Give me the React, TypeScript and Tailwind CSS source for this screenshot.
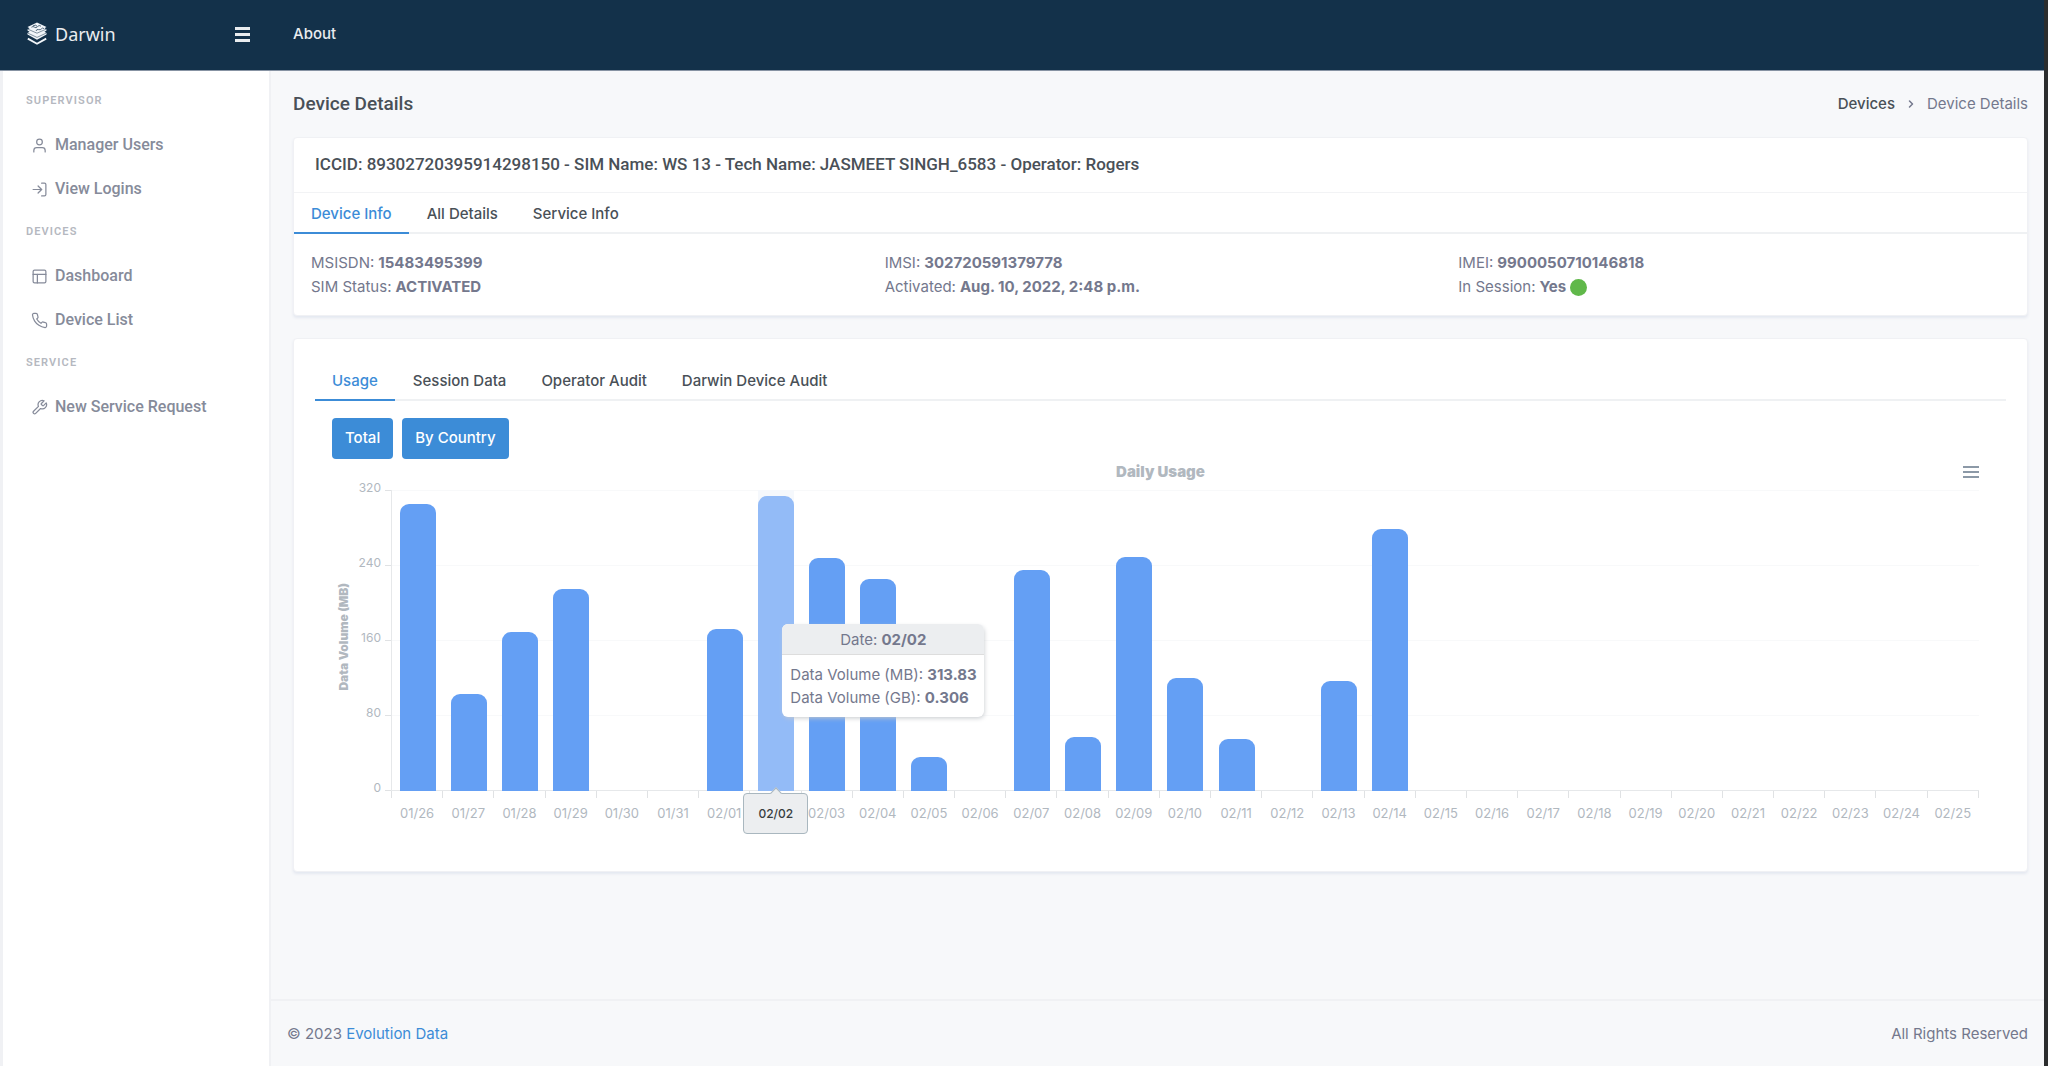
import React, { useState } from 'react'
import { FiUser, FiLogIn, FiLayout, FiPhone, FiTool, FiChevronRight } from 'react-icons/fi'

interface UsageDay {
  date: string
  mb: number
}

const menu = [
  {
    title: 'Supervisor',
    items: [
      { label: 'Manager Users', icon: FiUser },
      { label: 'View Logins', icon: FiLogIn },
    ],
  },
  {
    title: 'Devices',
    items: [
      { label: 'Dashboard', icon: FiLayout },
      { label: 'Device List', icon: FiPhone },
    ],
  },
  {
    title: 'Service',
    items: [{ label: 'New Service Request', icon: FiTool }],
  },
]

const usage: UsageDay[] = [
  { date: '01/26', mb: 305.5 },
  { date: '01/27', mb: 103.5 },
  { date: '01/28', mb: 168.6 },
  { date: '01/29', mb: 214.5 },
  { date: '01/30', mb: 0 },
  { date: '01/31', mb: 0 },
  { date: '02/01', mb: 172.3 },
  { date: '02/02', mb: 313.83 },
  { date: '02/03', mb: 247.5 },
  { date: '02/04', mb: 225.5 },
  { date: '02/05', mb: 36 },
  { date: '02/06', mb: 0 },
  { date: '02/07', mb: 235 },
  { date: '02/08', mb: 57 },
  { date: '02/09', mb: 249 },
  { date: '02/10', mb: 120 },
  { date: '02/11', mb: 55 },
  { date: '02/12', mb: 0 },
  { date: '02/13', mb: 117.3 },
  { date: '02/14', mb: 279 },
  { date: '02/15', mb: 0 },
  { date: '02/16', mb: 0 },
  { date: '02/17', mb: 0 },
  { date: '02/18', mb: 0 },
  { date: '02/19', mb: 0 },
  { date: '02/20', mb: 0 },
  { date: '02/21', mb: 0 },
  { date: '02/22', mb: 0 },
  { date: '02/23', mb: 0 },
  { date: '02/24', mb: 0 },
  { date: '02/25', mb: 0 },
]

const MAX_MB = 320
const ticks = [320, 240, 160, 80, 0]

function Logo() {
  return (
    <svg viewBox="0 0 20 24" className="w-5 h-6 text-slate-100" aria-hidden="true">
      <path d="M10 .5 19.5 5 17.5 6.2 19.5 7.4 19.5 8.6 17.5 9.8 19.5 11 19.5 12.6 10 17.8.5 12.6.5 11 2.5 9.8.5 8.6.5 7.4 2.5 6.2.5 5z" fill="currentColor" />
      <path d="M1 7.2 10 11.200l9-4M1 11.200l9 4.200 9-4.200" fill="none" stroke="#13314a" strokeWidth=".5" />
      <path d="M4.500 5.200q1.500-1.400 3 0t3-.6 3.500-.4M9 9q.5-2 2.500-1.400t3-.8 2.500-.2M6 3.800l2.500-.6 1.500 1" fill="none" stroke="#13314a" strokeWidth=".7" />
      <path d="M.8 16.600 10 21.800l9.200-5.200" fill="none" stroke="currentColor" strokeWidth="1.8" />
    </svg>
  )
}

function Tabs({ tabs, label }: { tabs: string[]; label: string }) {
  const [active, setActive] = useState(tabs[0])

  return (
    <div role="tablist" aria-label={label} className="flex gap-px border-b-2 border-[#eff1f3]">
      {tabs.map(tab => (
        <button
          key={tab}
          role="tab"
          aria-selected={tab === active}
          onClick={() => setActive(tab)}
          className={`-mb-0.5 h-[41px] pt-[3px] px-[17px] border-b-2 text-[15px] font-medium ${
            tab === active ? 'border-[#3c8cd7] text-[#3c8cd7]' : 'border-transparent text-[#495057]'
          }`}
        >
          {tab}
        </button>
      ))}
    </div>
  )
}

function Field({ name, children }: { name: string; children: React.ReactNode }) {
  return (
    <p className="flex items-center gap-1">
      {name}: <strong className="font-bold">{children}</strong>
    </p>
  )
}

function UsageChart() {
  const hovered = '02/02'

  return (
    <div className="px-[17px] pb-[73px]">
      <div className="relative flex justify-center items-center h-[26px]">
        <h2 className="text-[15px] font-black text-[#b1b8bf]">Daily Usage</h2>
        <button aria-label="Chart menu" className="absolute right-[10px] flex flex-col gap-[3px]">
          <span className="w-4 h-0.5 bg-[#8c99a7]"></span>
          <span className="w-4 h-0.5 bg-[#8c99a7]"></span>
          <span className="w-4 h-0.5 bg-[#8c99a7]"></span>
        </button>
      </div>

      <div className="flex mt-[5px] pr-[10px]">
        <div className="flex items-center w-6 h-[293px] justify-center">
          <span className="[writing-mode:vertical-rl] rotate-180 text-xs font-black text-[#b1b8bf] whitespace-nowrap">
            Data Volume (MB)
          </span>
        </div>
        <div className="flex flex-col justify-between -mt-[3px] w-[25px] h-[301px] text-right text-xs leading-[1px] text-[#b1b8bf]">
          {ticks.map(tick => (
            <span key={tick}>{tick}</span>
          ))}
        </div>

        <div className="ml-1 flex-1">
          <div className="grid h-[301px] pl-[6px]">
            <div className="[grid-area:1/1] flex flex-col justify-between">
              {ticks.map(tick => (
                <div key={tick} className="flex h-px">
                  <span className="-ml-[6px] w-[6px] bg-[#e0e2e4]"></span>
                  <span className={`flex-1 ${tick === 0 ? 'bg-[#e6e8ea]' : 'bg-[#f8f9fa]'}`}></span>
                </div>
              ))}
            </div>
            <div className="[grid-area:1/1] relative flex items-end border-l border-[#e6e8ea]">
              {usage.map(day => (
                <div key={day.date} className="relative flex-1 h-full flex items-end justify-center">
                  <div className={`flex items-end w-[36px] h-full ${day.date === hovered ? 'bg-[#f5f8fc]' : ''}`}>
                    <div
                      className={`w-full rounded-t-[9px] ${day.date === hovered ? 'bg-[#93bbf7]' : 'bg-[#649ff4]'}`}
                      style={{ height: `${(day.mb / MAX_MB) * 100}%` }}
                    ></div>
                  </div>
                  {day.date === hovered && (
                    <div
                      role="tooltip"
                      className="absolute z-10 left-8 top-[134px] w-[202px] rounded-md overflow-hidden bg-white text-[#74788d] text-[15px] shadow-[1px_2px_5px_-1px_#c4c8cc]"
                    >
                      <p className="h-[31px] leading-[31px] text-center bg-[#eceef0] border-b border-[#dddddd]">
                        Date: <strong>02/02</strong>
                      </p>
                      <div className="px-2 py-2 leading-[23px] whitespace-nowrap">
                        <p>Data Volume (MB): <strong>313.83</strong></p>
                        <p>Data Volume (GB): <strong>0.306</strong></p>
                      </div>
                    </div>
                  )}
                </div>
              ))}
            </div>
          </div>

          <div className="flex pl-[6px]">
            {usage.map(day => (
              <div
                key={day.date}
                className="relative flex-1 h-[7px] border-l border-[#e0e2e4] last:border-r"
              >
                <span className="absolute top-3 inset-x-0 text-center text-[13px] leading-5 text-[#b1b8bf]">
                  {day.date}
                </span>
                {day.date === hovered && (
                  <div className="absolute z-10 top-[2px] -left-[7px] w-[65px] h-[41px] flex items-center justify-center rounded-sm border border-[#a9b7bf] bg-[#eceef0] text-xs font-medium text-[#373d3f]">
                    <span className="absolute -top-[5px] size-2 rotate-45 border-l border-t border-[#a9b7bf] bg-[#eceef0]"></span>
                    {day.date}
                  </div>
                )}
              </div>
            ))}
          </div>
        </div>
      </div>
    </div>
  )
}

export default function App() {
  return (
    <div className="min-h-screen flex flex-col bg-[#f7f8fa] border-r-4 border-[#2b2d2e] font-['Inter',sans-serif] text-[15px] text-[#74788d]">
      <header className="flex items-center h-[70px] pb-[2px] bg-[#13314a] text-[#e9ecef]">
        <div className="w-[271px] flex items-center justify-between pl-[27px] pr-[21px]">
          <a href="#" className="flex items-center gap-2 font-['Noto_Sans',sans-serif] text-lg">
            <Logo />
            Darwin
          </a>
          <button aria-label="Toggle menu" className="flex flex-col gap-[3px]">
            <span className="w-[15px] h-[3px] bg-[#e9ecef]"></span>
            <span className="w-[15px] h-[3px] bg-[#e9ecef]"></span>
            <span className="w-[15px] h-[3px] bg-[#e9ecef]"></span>
          </button>
        </div>
        <a href="#" className="ml-[22px] font-medium">About</a>
      </header>

      <div className="flex flex-1 border-t border-[#8793a3]">
        <nav className="w-[271px] shrink-0 bg-white border-l-3 border-r-2 border-[#f0f1f4] pt-[9px] font-['Roboto',sans-serif]">
          {menu.map(section => (
            <div key={section.title}>
              <h2 className="h-[43px] pl-[23px] flex items-center text-[11px] font-semibold uppercase tracking-widest text-[#b5b8c0]">
                {section.title}
              </h2>
              <ul>
                {section.items.map(item => (
                  <li key={item.label}>
                    <a href="#" className="flex items-center gap-[7px] h-11 pl-[28px] text-base font-medium text-[#868b9a]">
                      <item.icon className="size-[17px]" strokeWidth={1.75} />
                      {item.label}
                    </a>
                  </li>
                ))}
              </ul>
            </div>
          ))}
        </nav>

        <div className="flex-1 flex flex-col min-w-0">
          <main className="flex-1 pl-[22px] pr-4">
            <div className="flex items-center justify-between h-[66px]">
              <h1 className="font-['Roboto',sans-serif] text-[19px] font-medium text-[#495057]">Device Details</h1>
              <nav aria-label="Breadcrumb" className="flex items-center gap-[10px]">
                <a href="#" className="font-medium text-[#495057]">Devices</a>
                <FiChevronRight className="size-3" strokeWidth={3} />
                <span>Device Details</span>
              </nav>
            </div>

            <section className="bg-white rounded border border-[#f0f1f4] shadow-[0_2px_3px_#e4e8f0]">
              <h2 className="h-[55px] px-[21px] flex items-center font-['Roboto',sans-serif] text-[17px] font-medium text-[#495057] border-b border-[#f2f3f5]">
                ICCID: 89302720395914298150 - SIM Name: WS 13 - Tech Name: JASMEET SINGH_6583 - Operator: Rogers
              </h2>
              <Tabs label="Device" tabs={['Device Info', 'All Details', 'Service Info']} />
              <div className="grid grid-cols-3 gap-x-[22px] px-[17px] pt-[17px] pb-[16px] leading-6">
                <div>
                  <Field name="MSISDN">15483495399</Field>
                  <Field name="SIM Status">ACTIVATED</Field>
                </div>
                <div>
                  <Field name="IMSI">302720591379778</Field>
                  <Field name="Activated">Aug. 10, 2022, 2:48 p.m.</Field>
                </div>
                <div>
                  <Field name="IMEI">9900050710146818</Field>
                  <div className="flex items-center gap-1">
                    <Field name="In Session">Yes</Field>
                    <span className="size-[17px] rounded-full bg-[#60b84a]"></span>
                  </div>
                </div>
              </div>
            </section>

            <section className="mt-[22px] bg-white rounded border border-[#f0f1f4] shadow-[0_2px_3px_#e4e8f0] px-[21px] pt-[21px]">
              <Tabs label="Usage" tabs={['Usage', 'Session Data', 'Operator Audit', 'Darwin Device Audit']} />
              <div className="flex gap-[9px] px-[17px] pt-[17px]">
                <button className="h-[41px] px-[13px] rounded bg-[#3c8cd7] text-white font-medium">Total</button>
                <button className="h-[41px] px-[13px] rounded bg-[#3c8cd7] text-white font-medium">By Country</button>
              </div>
              <UsageChart />
            </section>
          </main>

          <footer className="flex items-center justify-between h-[67px] px-4 pt-px border-t-2 border-[#f0f1f4]">
            <span>
              © 2023 <a href="#" className="text-[#3c8cd7]">Evolution Data</a>
            </span>
            <span>All Rights Reserved</span>
          </footer>
        </div>
      </div>
    </div>
  )
}
